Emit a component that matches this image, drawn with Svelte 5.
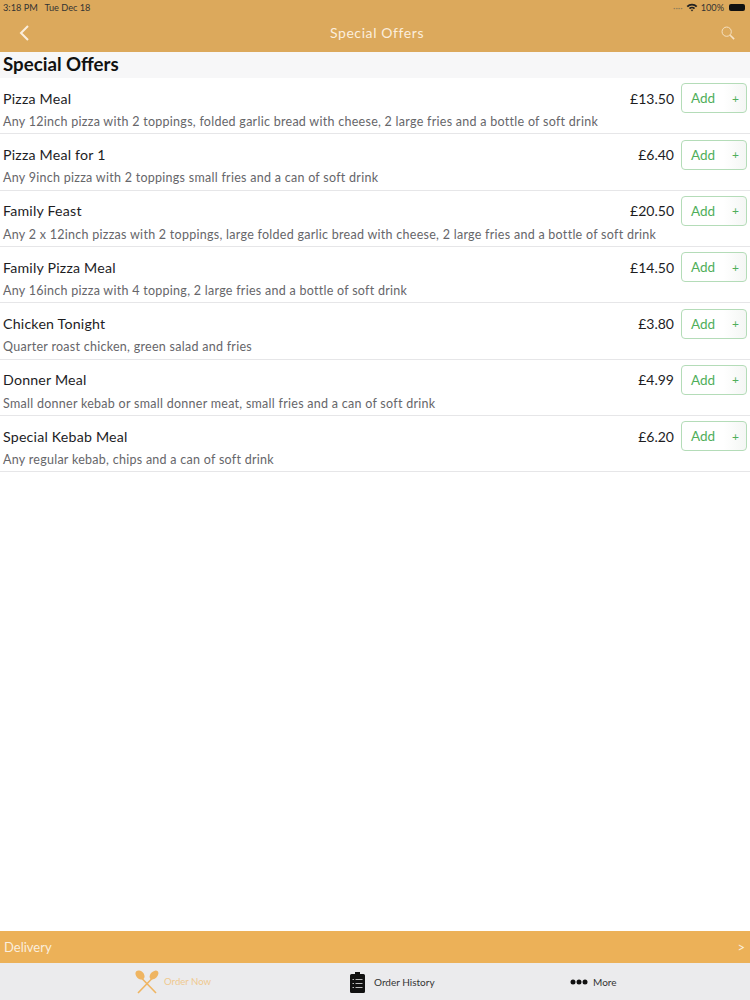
<script>
  const offers = [
    { name: "Pizza Meal", price: "£13.50", desc: "Any 12inch pizza with 2 toppings, folded garlic bread with cheese, 2 large fries and a bottle of soft drink" },
    { name: "Pizza Meal for 1", price: "£6.40", desc: "Any 9inch pizza with 2 toppings small fries and a can of soft drink" },
    { name: "Family Feast", price: "£20.50", desc: "Any 2 x 12inch pizzas with 2 toppings, large folded garlic bread with cheese, 2 large fries and a bottle of soft drink" },
    { name: "Family Pizza Meal", price: "£14.50", desc: "Any 16inch pizza with 4 topping, 2 large fries and a bottle of soft drink" },
    { name: "Chicken Tonight", price: "£3.80", desc: "Quarter roast chicken, green salad and fries" },
    { name: "Donner Meal", price: "£4.99", desc: "Small donner kebab or small donner meat, small fries and a can of soft drink" },
    { name: "Special Kebab Meal", price: "£6.20", desc: "Any regular kebab, chips and a can of soft drink" },
  ];
</script>

<div class="page">
  <header class="top">
    <div class="status">
      <span>3:18 PM&nbsp;&nbsp; Tue Dec 18</span>
      <div class="status-right">
        <span class="dots">····</span>
        <svg width="12" height="9" viewBox="0 0 13 10">
          <path d="M0.5 3.2a8.6 8.6 0 0 1 12 0L11 4.7a6.5 6.5 0 0 0-9 0z" fill="#222" />
          <path d="M3 5.6a5 5 0 0 1 7 0L8.6 7a3 3 0 0 0-4.2 0z" fill="#222" />
          <path d="M5.2 7.8a1.9 1.9 0 0 1 2.6 0L6.5 9.4z" fill="#222" />
        </svg>
        <span>100%</span>
        <span class="battery"></span>
      </div>
    </div>
    <div class="nav">
      <svg width="12" height="18" viewBox="0 0 12 18">
        <path d="M10 2L3 9l7 7" fill="none" stroke="#fbeedd" stroke-width="2" />
      </svg>
      <span class="nav-title">Special Offers</span>
      <svg width="14" height="14" viewBox="0 0 16 16">
        <circle cx="6.5" cy="6.5" r="5.3" fill="none" stroke="#f6e2c4" stroke-width="1.1" />
        <path d="M10.5 10.5L15 15" stroke="#f6e2c4" stroke-width="1.8" />
      </svg>
    </div>
  </header>

  <h1 class="section">Special Offers</h1>

  <ul class="list">
    {#each offers as item}
      <li class="row">
        <div class="row-top">
          <span class="name">{item.name}</span>
          <span class="price">{item.price}</span>
          <button class="add"><span>Add</span><span class="plus">+</span></button>
        </div>
        <p class="desc">{item.desc}</p>
      </li>
    {/each}
  </ul>

  <div class="delivery">
    <span>Delivery</span>
    <span>&gt;</span>
  </div>

  <nav class="tabs">
    <div class="tab active">
      <svg width="24" height="24" viewBox="0 0 24 24">
        <path d="M17.5 8L3 23M6.5 8L21 23" stroke="#efb562" stroke-width="1.6" fill="none" />
        <ellipse cx="5" cy="5" rx="3.8" ry="5.2" transform="rotate(-45 5 5)" fill="#efb562" />
        <ellipse cx="19" cy="5" rx="3.4" ry="5.2" transform="rotate(45 19 5)" fill="#efb562" />
      </svg>
      <span>Order Now</span>
    </div>
    <div class="tab">
      <svg width="15" height="22" viewBox="0 0 15 22">
        <path d="M1.5 3H5V1h5V3h3.5A1.5 1.5 0 0 1 15 4.5V20.5A1.5 1.5 0 0 1 13.5 22H1.5A1.5 1.5 0 0 1 0 20.5V4.5A1.5 1.5 0 0 1 1.5 3z" fill="#111" />
        <path d="M5.5 8.5h7M5.5 12.5h7M5.5 16.5h7M2.5 8.5h1.5M2.5 12.5h1.5M2.5 16.5h1.5" stroke="#bbb" stroke-width="1" />
      </svg>
      <span>Order History</span>
    </div>
    <div class="tab">
      <svg width="18" height="6" viewBox="0 0 18 6">
        <circle cx="3" cy="3" r="2.5" fill="#111" />
        <circle cx="9" cy="3" r="2.5" fill="#111" />
        <circle cx="15" cy="3" r="2.5" fill="#111" />
      </svg>
      <span>More</span>
    </div>
  </nav>
</div>

<style>
  :global(body) {
    margin: 0;
  }

  .page {
    width: 750px;
    height: 1000px;
    display: flex;
    flex-direction: column;
    background: #fff;
    font-family: Lato, "Liberation Sans", sans-serif;
    color: #1d1d1f;
  }

  .top {
    height: 52px;
    background: #dca95c;
    flex-shrink: 0;
  }

  .status {
    display: flex;
    justify-content: space-between;
    align-items: center;
    height: 15px;
    padding: 0 5px 0 3px;
    font-size: 9.2px;
    color: #333;
  }

  .status-right {
    display: flex;
    align-items: center;
    gap: 3px;
  }

  .dots {
    color: #8a7a5a;
  }

  .battery {
    width: 16px;
    height: 7px;
    margin-left: 2px;
    border-radius: 2px;
    background: #111;
  }

  .nav {
    position: relative;
    display: flex;
    justify-content: space-between;
    align-items: center;
    height: 35px;
    padding: 0 15px 0 18px;
  }

  .nav-title {
    position: absolute;
    left: 4px;
    right: 0;
    text-align: center;
    font-size: 14px;
    color: #fbeedd;
    letter-spacing: 0.6px;
  }

  .section {
    margin: 0;
    height: 26px;
    padding: 0 3px;
    background: #f7f7f8;
    font-size: 18.7px;
    line-height: 24px;
    font-weight: 700;
    color: #111;
  }

  .list {
    list-style: none;
    margin: 0;
    padding: 0;
    flex: 1;
  }

  .row {
    box-sizing: border-box;
    height: 56.33px;
    padding: 5.5px 3px 0;
    border-bottom: 1px solid #e6e6e8;
  }

  .row-top {
    display: flex;
    align-items: center;
    height: 29.5px;
  }

  .name {
    flex: 1;
    font-size: 14.2px;
    letter-spacing: 0.2px;
  }

  .price {
    font-size: 14px;
    margin-right: 7px;
  }

  .add {
    display: flex;
    justify-content: space-between;
    align-items: center;
    flex-shrink: 0;
    width: 66px;
    height: 30px;
    padding: 0 7px 0 9px;
    background: linear-gradient(90deg, #fff 65%, #f4f6f4);
    border: 1.5px solid #b4dcb8;
    border-radius: 4px;
    color: #4fae5a;
    font-family: inherit;
    font-size: 13.5px;
  }

  .plus {
    font-size: 12px;
  }

  .desc {
    margin: 0;
    font-size: 12.5px;
    line-height: 18px;
    letter-spacing: 0.275px;
    color: #66666a;
    white-space: nowrap;
  }

  .delivery {
    display: flex;
    justify-content: space-between;
    align-items: center;
    height: 32px;
    padding: 0 5px 0 4px;
    flex-shrink: 0;
    background: #ecb158;
    color: #fbeedd;
    font-size: 13px;
  }

  .tabs {
    display: grid;
    grid-template-columns: 215px 220px 1fr;
    height: 37px;
    padding-left: 135px;
    flex-shrink: 0;
    background: #ebebed;
    font-size: 10px;
    color: #333;
  }

  .tab {
    display: flex;
    align-items: center;
    gap: 5px;
  }

  .tab:nth-child(2) {
    gap: 9px;
  }

  .tab.active {
    color: #efc98f;
    font-size: 9.6px;
  }
</style>
